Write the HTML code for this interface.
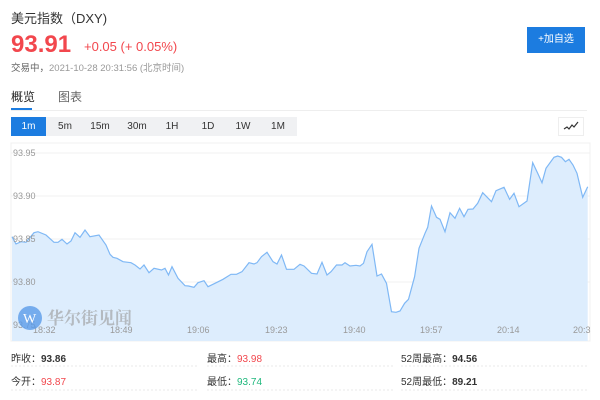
<!DOCTYPE html>
<html><head><meta charset="utf-8"><style>
body{margin:0;width:600px;height:400px;background:#fff;font-family:"Liberation Sans","Noto Sans CJK SC",sans-serif;position:relative;overflow:hidden;color:#333}
.a{position:absolute;white-space:nowrap}
.tb{position:absolute;top:117px;height:19px;line-height:19px;font-size:10px;text-align:center;color:#333}
.st{position:absolute;font-size:10px;color:#333}
.st b{font-weight:bold}
</style></head><body>
<div class="a" style="left:11px;top:8px;font-size:13px;color:#333">美元指数（DXY)</div>
<div class="a" style="left:11px;top:31px;font-size:24px;font-weight:bold;color:#f2474d">93.91</div>
<div class="a" style="left:84px;top:39px;font-size:13px;color:#f2474d">+0.05 (+ 0.05%)</div>
<div class="a" style="left:11px;top:60px;font-size:9.5px;color:#666">交易中，<span style="color:#999">2021-10-28 20:31:56 (北京时间)</span></div>
<div class="a" style="left:527px;top:27px;width:58px;height:26px;background:#1c7ce0;color:#fff;font-size:10px;line-height:26px;text-align:center">+加自选</div>
<div class="a" style="left:11px;top:88px;font-size:12px;color:#222">概览</div>
<div class="a" style="left:58px;top:88px;font-size:12px;color:#666">图表</div>
<div class="a" style="left:11px;top:108px;width:21px;height:2px;background:#1c7ce0"></div>
<div class="a" style="left:11px;top:110px;width:576px;height:1px;background:#eee"></div>
<div class="a" style="left:11px;top:117px;width:286px;height:19px;background:#f0f1f3"></div>
<div class="tb" style="left:11px;width:35px;background:#1c7ce0;color:#fff">1m</div>
<div class="tb" style="left:48px;width:34px">5m</div>
<div class="tb" style="left:83px;width:34px">15m</div>
<div class="tb" style="left:119px;width:36px">30m</div>
<div class="tb" style="left:155px;width:34px">1H</div>
<div class="tb" style="left:191px;width:34px">1D</div>
<div class="tb" style="left:226px;width:34px">1W</div>
<div class="tb" style="left:261px;width:34px">1M</div>
<div class="a" style="left:558px;top:117px;width:26px;height:19px;border:1px solid #eee;box-sizing:border-box"></div>
<svg class="a" style="left:563px;top:120px" width="16" height="12"><polyline points="1,9 4,7 6,9 9,5 11,7 15,2" fill="none" stroke="#333" stroke-width="1.2"/></svg>
<svg class="a" style="left:0;top:0" width="600" height="400">
<rect x="11" y="143" width="579" height="198" fill="none" stroke="#f0f0f0"/>
<g stroke="#f0f0f0"><line x1="11" y1="153" x2="590" y2="153"/><line x1="11" y1="196" x2="590" y2="196"/><line x1="11" y1="239" x2="590" y2="239"/><line x1="11" y1="282" x2="590" y2="282"/></g>
<polygon fill="#ddedfd" points="12,341 12,236.7 16,244 21,241.7 26,242.3 34,232.7 38,231.7 46,235 54,242.3 58,242.3 62,239.3 67,244 71,241 75,232.7 80,237.3 85,230 90,236.7 99,235 106,245 110,254.3 113,257.3 117,258.3 123,261.7 131,262.7 135,265 140,269 144,265 149,272.7 154,268.3 161.5,270 165,268.3 168.5,275 172,266.7 178,278.3 185,285.7 188.5,286 194,287.3 198,282.7 204,280.7 208,286.7 215,283.3 223,279.3 231,274.3 236.5,274.3 242,271.7 249,262.7 254,264 257,262.7 261.5,256.7 267,252.3 273,261.7 277,264 281.5,255 286.5,269.3 294,269.3 300,264.3 304,266 311.5,273.3 317,274 322,262.3 327,275 331,271.7 336.5,265 342,265 345,262.7 350,266 356,265.3 360,266 363.5,263.3 367,251.7 372,244.3 377,276 381.5,274 386.5,283.3 391.5,311.7 396,312.3 400,311 404.6,303.3 408.5,299.3 414.6,276.7 419,248.3 425,233.3 427.7,227.3 431.5,206 436.5,217.3 440,219.3 445,231.7 450,212.7 455,218.3 459.6,208.3 464,216.7 468,209.3 473,209 477.7,203.3 482.7,192.7 491.5,201.7 496,190.7 504,187.3 509.6,199.3 514,193.3 519,206.7 527,201 532.7,162.7 537.7,173.3 542,182.7 546,168.3 554,157.3 557.7,156 561.5,157.3 565.4,161.7 569,159.3 573,165 577,173.3 582.7,197.3 587.7,186.7 587.7,341"/>
<polyline fill="none" stroke="#7fb8f5" stroke-width="1.2" points="12,236.7 16,244 21,241.7 26,242.3 34,232.7 38,231.7 46,235 54,242.3 58,242.3 62,239.3 67,244 71,241 75,232.7 80,237.3 85,230 90,236.7 99,235 106,245 110,254.3 113,257.3 117,258.3 123,261.7 131,262.7 135,265 140,269 144,265 149,272.7 154,268.3 161.5,270 165,268.3 168.5,275 172,266.7 178,278.3 185,285.7 188.5,286 194,287.3 198,282.7 204,280.7 208,286.7 215,283.3 223,279.3 231,274.3 236.5,274.3 242,271.7 249,262.7 254,264 257,262.7 261.5,256.7 267,252.3 273,261.7 277,264 281.5,255 286.5,269.3 294,269.3 300,264.3 304,266 311.5,273.3 317,274 322,262.3 327,275 331,271.7 336.5,265 342,265 345,262.7 350,266 356,265.3 360,266 363.5,263.3 367,251.7 372,244.3 377,276 381.5,274 386.5,283.3 391.5,311.7 396,312.3 400,311 404.6,303.3 408.5,299.3 414.6,276.7 419,248.3 425,233.3 427.7,227.3 431.5,206 436.5,217.3 440,219.3 445,231.7 450,212.7 455,218.3 459.6,208.3 464,216.7 468,209.3 473,209 477.7,203.3 482.7,192.7 491.5,201.7 496,190.7 504,187.3 509.6,199.3 514,193.3 519,206.7 527,201 532.7,162.7 537.7,173.3 542,182.7 546,168.3 554,157.3 557.7,156 561.5,157.3 565.4,161.7 569,159.3 573,165 577,173.3 582.7,197.3 587.7,186.7"/>
<g font-family="Liberation Sans,sans-serif" font-size="9" fill="#999"><text x="13" y="156">93.95</text><text x="13" y="199">93.90</text><text x="13" y="242">93.85</text><text x="13" y="285">93.80</text><text x="13" y="328">93.75</text>
<text x="33" y="333">18:32</text><text x="110" y="333">18:49</text><text x="187" y="333">19:06</text><text x="265" y="333">19:23</text><text x="343" y="333">19:40</text><text x="420" y="333">19:57</text><text x="497" y="333">20:14</text><text x="573" y="333">20:3</text></g>
<circle cx="30" cy="318" r="12" fill="#5b9be8" opacity="0.8"/>
<text x="23" y="323" font-size="14" fill="#fff" font-family="Liberation Serif,serif">W</text>
<text x="47" y="324" font-size="17" font-weight="bold" fill="#999" opacity="0.6" font-family="Noto Serif CJK SC,serif">华尔街见闻</text>
<g stroke="#e8e8e8" stroke-dasharray="2,2"><line x1="11" y1="366" x2="198" y2="366"/><line x1="207" y1="366" x2="393" y2="366"/><line x1="401" y1="366" x2="588" y2="366"/><line x1="11" y1="390" x2="198" y2="390"/><line x1="207" y1="390" x2="393" y2="390"/><line x1="401" y1="390" x2="588" y2="390"/></g>
</svg>
<div class="st" style="left:11px;top:350px">昨收：<b>93.86</b></div>
<div class="st" style="left:207px;top:350px">最高：<b style="color:#f2474d;font-weight:normal">93.98</b></div>
<div class="st" style="left:401px;top:350px">52周最高：<b>94.56</b></div>
<div class="st" style="left:11px;top:373px">今开：<b style="color:#f2474d;font-weight:normal">93.87</b></div>
<div class="st" style="left:207px;top:373px">最低：<b style="color:#1fb87d;font-weight:normal">93.74</b></div>
<div class="st" style="left:401px;top:373px">52周最低：<b>89.21</b></div>
</body></html>
